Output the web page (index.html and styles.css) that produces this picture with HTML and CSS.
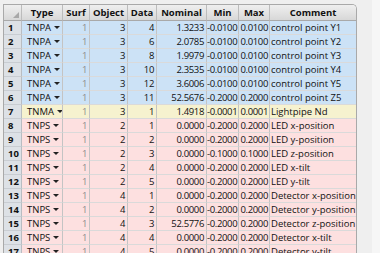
FILE: index.html
```html
<!DOCTYPE html>
<html>
<head>
<meta charset="utf-8">
<link rel="stylesheet" href="styles.css">
</head>
<body>
<div class="grid">
  <div class="row head">
    <div class="c rn corner"><span class="tri"></span></div>
    <div class="c ctr">Type</div>
    <div class="c ctr">Surf</div>
    <div class="c ctr">Object</div>
    <div class="c ctr">Data</div>
    <div class="c ctr">Nominal</div>
    <div class="c ctr">Min</div>
    <div class="c ctr">Max</div>
    <div class="c ctr">Comment</div>
  </div>
  <div class="row blue"><div class="c rn">1</div><div class="c type">TNPA<span class="dd"></span></div><div class="c num dim">1</div><div class="c num">3</div><div class="c num">4</div><div class="c num">1.3233</div><div class="c num tight">-0.0100</div><div class="c num tight">0.0100</div><div class="c txt">control point Y1</div></div>
  <div class="row blue"><div class="c rn">2</div><div class="c type">TNPA<span class="dd"></span></div><div class="c num dim">1</div><div class="c num">3</div><div class="c num">6</div><div class="c num">2.0785</div><div class="c num tight">-0.0100</div><div class="c num tight">0.0100</div><div class="c txt">control point Y2</div></div>
  <div class="row blue"><div class="c rn">3</div><div class="c type">TNPA<span class="dd"></span></div><div class="c num dim">1</div><div class="c num">3</div><div class="c num">8</div><div class="c num">1.9979</div><div class="c num tight">-0.0100</div><div class="c num tight">0.0100</div><div class="c txt">control point Y3</div></div>
  <div class="row blue"><div class="c rn">4</div><div class="c type">TNPA<span class="dd"></span></div><div class="c num dim">1</div><div class="c num">3</div><div class="c num">10</div><div class="c num">2.3535</div><div class="c num tight">-0.0100</div><div class="c num tight">0.0100</div><div class="c txt">control point Y4</div></div>
  <div class="row blue"><div class="c rn">5</div><div class="c type">TNPA<span class="dd"></span></div><div class="c num dim">1</div><div class="c num">3</div><div class="c num">12</div><div class="c num">3.6006</div><div class="c num tight">-0.0100</div><div class="c num tight">0.0100</div><div class="c txt">control point Y5</div></div>
  <div class="row blue"><div class="c rn">6</div><div class="c type">TNPA<span class="dd"></span></div><div class="c num dim">1</div><div class="c num">3</div><div class="c num">11</div><div class="c num">52.5676</div><div class="c num tight">-0.2000</div><div class="c num tight">0.2000</div><div class="c txt">control point Z5</div></div>
  <div class="row yellow"><div class="c rn">7</div><div class="c type">TNMA<span class="dd"></span></div><div class="c num dim">1</div><div class="c num">3</div><div class="c num">1</div><div class="c num">1.4918</div><div class="c num tight">-0.0001</div><div class="c num tight">0.0001</div><div class="c txt">Lightpipe Nd</div></div>
  <div class="row pink"><div class="c rn">8</div><div class="c type">TNPS<span class="dd"></span></div><div class="c num dim">1</div><div class="c num">2</div><div class="c num">1</div><div class="c num">0.0000</div><div class="c num tight">-0.2000</div><div class="c num tight">0.2000</div><div class="c txt">LED x-position</div></div>
  <div class="row pink"><div class="c rn">9</div><div class="c type">TNPS<span class="dd"></span></div><div class="c num dim">1</div><div class="c num">2</div><div class="c num">2</div><div class="c num">0.0000</div><div class="c num tight">-0.2000</div><div class="c num tight">0.2000</div><div class="c txt">LED y-position</div></div>
  <div class="row pink"><div class="c rn">10</div><div class="c type">TNPS<span class="dd"></span></div><div class="c num dim">1</div><div class="c num">2</div><div class="c num">3</div><div class="c num">0.0000</div><div class="c num tight">-0.1000</div><div class="c num tight">0.1000</div><div class="c txt">LED z-position</div></div>
  <div class="row pink"><div class="c rn">11</div><div class="c type">TNPS<span class="dd"></span></div><div class="c num dim">1</div><div class="c num">2</div><div class="c num">4</div><div class="c num">0.0000</div><div class="c num tight">-0.2000</div><div class="c num tight">0.2000</div><div class="c txt">LED x-tilt</div></div>
  <div class="row pink"><div class="c rn">12</div><div class="c type">TNPS<span class="dd"></span></div><div class="c num dim">1</div><div class="c num">2</div><div class="c num">5</div><div class="c num">0.0000</div><div class="c num tight">-0.2000</div><div class="c num tight">0.2000</div><div class="c txt">LED y-tilt</div></div>
  <div class="row pink"><div class="c rn">13</div><div class="c type">TNPS<span class="dd"></span></div><div class="c num dim">1</div><div class="c num">4</div><div class="c num">1</div><div class="c num">0.0000</div><div class="c num tight">-0.2000</div><div class="c num tight">0.2000</div><div class="c txt">Detector x-position</div></div>
  <div class="row pink"><div class="c rn">14</div><div class="c type">TNPS<span class="dd"></span></div><div class="c num dim">1</div><div class="c num">4</div><div class="c num">2</div><div class="c num">0.0000</div><div class="c num tight">-0.2000</div><div class="c num tight">0.2000</div><div class="c txt">Detector y-position</div></div>
  <div class="row pink"><div class="c rn">15</div><div class="c type">TNPS<span class="dd"></span></div><div class="c num dim">1</div><div class="c num">4</div><div class="c num">3</div><div class="c num">52.5776</div><div class="c num tight">-0.2000</div><div class="c num tight">0.2000</div><div class="c txt">Detector z-position</div></div>
  <div class="row pink"><div class="c rn">16</div><div class="c type">TNPS<span class="dd"></span></div><div class="c num dim">1</div><div class="c num">4</div><div class="c num">4</div><div class="c num">0.0000</div><div class="c num tight">-0.2000</div><div class="c num tight">0.2000</div><div class="c txt">Detector x-tilt</div></div>
  <div class="row pink"><div class="c rn">17</div><div class="c type">TNPS<span class="dd"></span></div><div class="c num dim">1</div><div class="c num">4</div><div class="c num">5</div><div class="c num">0.0000</div><div class="c num tight">-0.2000</div><div class="c num tight">0.2000</div><div class="c txt">Detector y-tilt</div></div>
</div>
</body>
</html>
```
FILE: styles.css
```css
html, body {
  margin: 0;
  padding: 0;
  height: 100%;
  overflow: hidden;
}
body {
  background: linear-gradient(to right, #efefef 0, #efefef 372px, #f6f6f6 372px);
  font-family: "Open Sans", "Noto Sans", sans-serif;
  font-size: 9.5px;
  color: #111;
  padding: 4px 0 0 3px;
  box-sizing: border-box;
}
.grid {
  width: 354px;
  border: 1px solid #a9a9a9;
  border-bottom: none;
  border-top-right-radius: 5px;
  overflow: hidden;
  box-sizing: border-box;
  background: #fff;
}
.row {
  display: grid;
  grid-template-columns: 18px 41px 27px 38px 29px 50px 32px 31px 86px;
  height: 14px;
}
.row.head {
  height: 16px;
  background: linear-gradient(#efefef, #d6d6d6);
}
.c {
  box-sizing: border-box;
  border-right: 1px solid #c4c4c4;
  border-bottom: 1px solid #dadada;
  line-height: 13px;
  white-space: nowrap;
  overflow: hidden;
  position: relative;
}
.c:last-child { border-right: none; }
.head .c {
  font-weight: bold;
  line-height: 15px;
  border-bottom: 1px solid #a9a9a9;
  border-right-color: #bcbcbc;
}
.ctr { text-align: center; }
.rn {
  background: #dde1e6;
  font-weight: bold;
  padding-left: 4px;
  border-right-color: #b9bdc2;
  border-bottom-color: #c9cdd2;
}
.head .rn { background: transparent; }
.corner .tri {
  position: absolute;
  right: 2px;
  bottom: 2px;
  width: 0;
  height: 0;
  border-left: 6px solid transparent;
  border-bottom: 6px solid #a8a8a8;
}
.blue .c:not(.rn) { background: #cce2f6; }
.yellow .c:not(.rn) { background: #f6f2cf; }
.pink .c:not(.rn) { background: #fde0e0; }
.type {
  padding-left: 5px;
  display: flex;
  align-items: center;
}
.dd {
  width: 0;
  height: 0;
  margin-left: 3px;
  border-left: 3px solid transparent;
  border-right: 3px solid transparent;
  border-top: 3px solid #222;
}
.num {
  text-align: right;
  padding-right: 2px;
  letter-spacing: -0.35px;
}
.num.tight { padding-right: 1px; }
.dim { color: #8c8c8c; }
.txt { padding-left: 1px; }
```
